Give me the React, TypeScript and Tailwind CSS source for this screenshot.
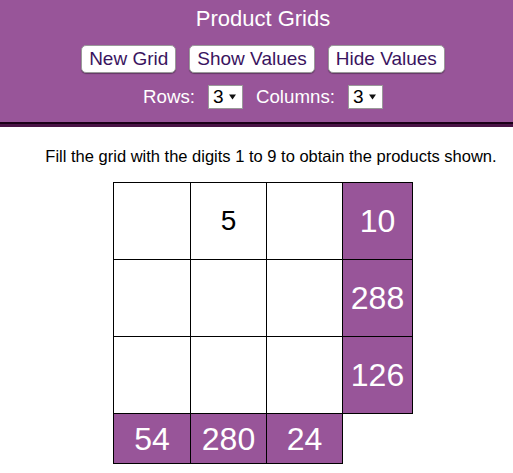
import React from "react";

function Btn({ label }: { label: string }) {
  return (
    <button className="h-[28px] px-[7px] rounded-[5px] bg-white border border-[#9a9a9a] shadow-[0_1px_1px_rgba(0,0,0,0.35)] text-[19px] leading-[22px] text-[#3a1460]">
      {label}
    </button>
  );
}

function Sel() {
  return (
    <span className="inline-flex items-center h-[24px] w-[35px] bg-white border border-[#9a9a9a] pl-[4px] gap-[5px] text-[19px] leading-[22px] text-black">
      3
      <svg width="7" height="6" viewBox="0 0 7 6">
        <path d="M0 0.5 L7 0.5 L3.5 5.5 Z" fill="#111" />
      </svg>
    </span>
  );
}

export default function App() {
  const grid: (string | null)[][] = [
    ["", "5", "", "10"],
    ["", "", "", "288"],
    ["", "", "", "126"],
    ["54", "280", "24", null],
  ];
  const colW = ["w-[77px]", "w-[76px]", "w-[76px]", "w-[70px]"];
  return (
    <div className="w-[513px] min-h-[473px] bg-white" style={{ fontFamily: '"Liberation Sans", Arial, sans-serif' }}>
      <div className="bg-[#985599] pt-[6px] pb-[13px] pl-[13px] flex flex-col items-center text-white">
        <div className="text-[22px] leading-[25px]">Product Grids</div>
        <div className="mt-[14px] flex gap-[13px]">
          <Btn label="New Grid" />
          <Btn label="Show Values" />
          <Btn label="Hide Values" />
        </div>
        <div className="mt-[12px] flex items-center text-[18.7px] leading-[22px]">
          <span>Rows:</span>
          <span className="ml-[13px]"><Sel /></span>
          <span className="ml-[13px]">Columns:</span>
          <span className="ml-[13px]"><Sel /></span>
        </div>
      </div>
      <div className="h-[2px] bg-[#1a0018]" />
      <div className="h-[3px] bg-[#4a1446]" />
      <div className="pl-[13px] flex flex-col items-center">
        <p className="mt-[20px] pl-[16px] text-[16.5px] leading-[19px] text-black whitespace-nowrap">
          Fill the grid with the digits 1 to 9 to obtain the products shown.
        </p>
        <table className="mt-[16px] ml-[0px] border-collapse">
          <tbody>
            {grid.map((row, r) => (
              <tr key={r} className={r === 3 ? "h-[50px]" : "h-[77px]"}>
                {row.map((v, c) => {
                  if (v === null) return <td key={c} className={colW[c]} />;
                  const isClue = r === 3 || c === 3;
                  return (
                    <td
                      key={c}
                      className={
                        colW[c] +
                        " border border-black text-center p-0 " +
                        (isClue ? "bg-[#985599] text-white text-[32px]" : "bg-white text-black text-[28px]")
                      }
                    >
                      {v}
                    </td>
                  );
                })}
              </tr>
            ))}
          </tbody>
        </table>
      </div>
    </div>
  );
}
